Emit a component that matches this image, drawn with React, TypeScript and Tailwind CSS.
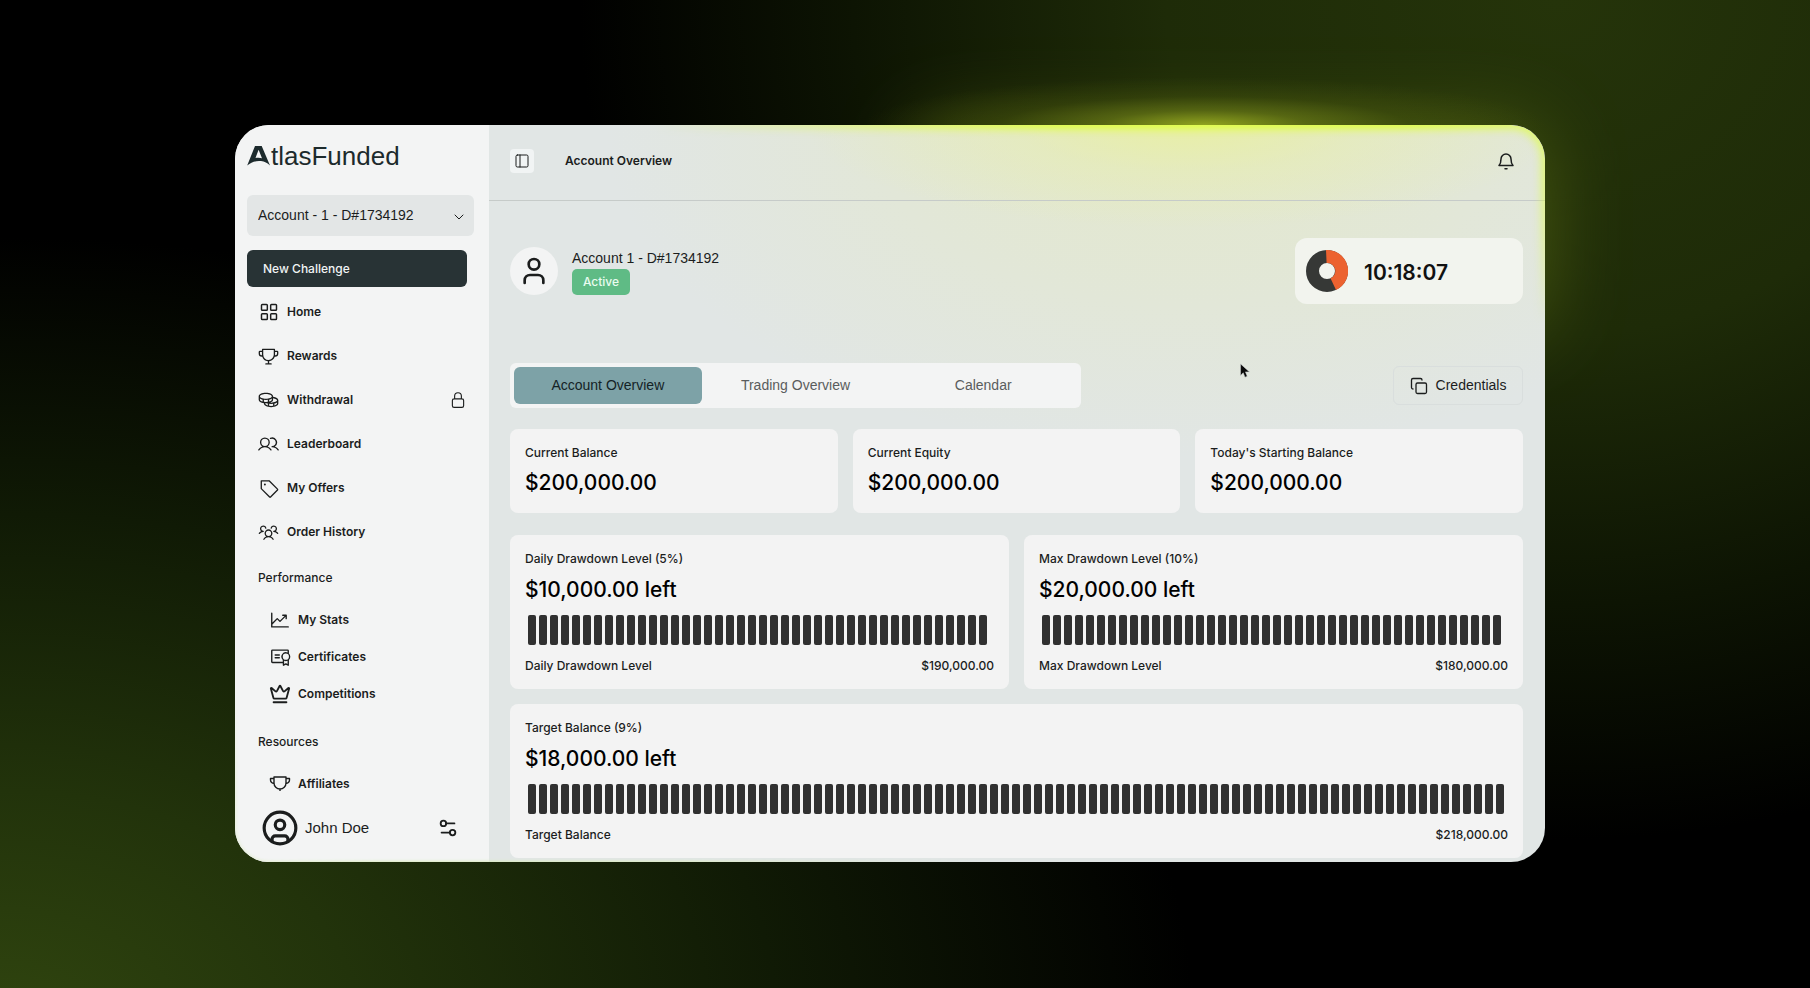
import { useState } from 'react';
import type { ComponentType } from 'react';
import {
  ChevronDown,
  CircleUser,
  Copy,
  Crown,
  LayoutGrid,
  PanelLeft,
  Settings2,
  User,
} from 'lucide-react';
import {
  PiCertificate,
  PiChartLineUp,
  PiCoins,
  PiTag,
  PiTrophy,
  PiUsers,
  PiUsersThree,
} from 'react-icons/pi';
import { HiOutlineLockClosed } from 'react-icons/hi2';

type Icon = ComponentType<{ className?: string }>;

const mainLinks: { label: string; icon: Icon; locked?: boolean; size?: string }[] = [
  { label: 'Home', icon: LayoutGrid, size: 'size-5 stroke-[1.75]' },
  { label: 'Rewards', icon: PiTrophy },
  { label: 'Withdrawal', icon: PiCoins, locked: true },
  { label: 'Leaderboard', icon: PiUsers },
  { label: 'My Offers', icon: PiTag },
  { label: 'Order History', icon: PiUsersThree },
];

const performanceLinks: { label: string; icon: Icon }[] = [
  { label: 'My Stats', icon: PiChartLineUp },
  { label: 'Certificates', icon: PiCertificate },
  { label: 'Competitions', icon: Crown },
];

const resourceLinks: { label: string; icon: Icon }[] = [
  { label: 'Affiliates', icon: TrophyCup },
];

const balances = [
  { label: 'Current Balance', value: '$200,000.00' },
  { label: 'Current Equity', value: '$200,000.00' },
  { label: "Today's Starting Balance", value: '$200,000.00' },
];

const tabs = ['Account Overview', 'Trading Overview', 'Calendar'];

export default function App() {
  return (
    <div className="relative min-h-screen overflow-hidden bg-black bg-[radial-gradient(ellipse_66%_80%_at_0%_104%,#30450f_0%,#22330b_30%,#101a05_65%,transparent_100%),radial-gradient(ellipse_54%_85%_at_86%_0%,#25340a_0%,#1e2b08_40%,#0d1403_72%,transparent_100%)] py-[125px] pr-[265px] pl-[235px] font-['Inter','Liberation_Sans',sans-serif] text-[#1b1d1d]">
      <div className="relative">
        {/* Glow behind the window */}
        <div className="absolute top-0 right-0 h-[28%] w-[48%] rounded-[34px] bg-[#6f8216] opacity-50 blur-2xl" />
        <div className="absolute -top-12 right-0 h-24 w-[52%] bg-[radial-gradient(ellipse_50%_50%_at_50%_50%,#a8bc24cc_0%,#7d8f1a80_30%,#55640f40_60%,transparent_100%)]" />

        <div className="relative flex overflow-hidden rounded-[34px] bg-[#e1e6e5]">
          <Sidebar />
          <Main />
          {/* Lit window edge */}
          <div className="pointer-events-none absolute inset-0 rounded-[34px] shadow-[inset_0_0_8px_4px_#dfff3c] mask-[radial-gradient(ellipse_44%_32%_at_76%_0%,black_30%,transparent_100%)]" />
          <div className="pointer-events-none absolute inset-0 rounded-[34px] shadow-[inset_0_0_3px_1px_#dcecc0] mask-[radial-gradient(ellipse_35%_30%_at_22%_100%,black_30%,transparent_100%)]" />
          <Cursor />
        </div>
      </div>
    </div>
  );
}

function Sidebar() {
  return (
    <aside className="flex w-[254px] shrink-0 flex-col bg-[#f3f4f4] pt-[21px] pb-2 pl-3">
      <Logo />

      <div className="relative mt-[29px] mr-[15px]">
        <select
          aria-label="Account"
          className="h-[41px] w-full appearance-none rounded-md bg-[#e3e6e6] pl-[11px] text-[14px] font-['Liberation_Sans',sans-serif]"
        >
          <option>Account - 1 - D#1734192</option>
        </select>
        <ChevronDown className="pointer-events-none absolute top-[14px] right-[7px] size-4" strokeWidth={1.5} />
      </div>

      <button className="mt-3.5 mr-[22px] h-[37px] rounded-md bg-[#283335] pl-4 text-left text-[12px] font-medium text-[#f1f4f4]">
        New Challenge
      </button>

      <nav className="mt-[3px]">
        {mainLinks.map(({ label, icon: LinkIcon, locked, size }) => (
          <a key={label} href="#" className="flex h-11 items-center pr-[22px] pl-[11px] text-[12px] font-semibold">
            <span className="mr-2 flex w-[21px] justify-center">
              <LinkIcon className={size ?? 'size-[22px]'} />
            </span>
            {label}
            {locked && <HiOutlineLockClosed className="ml-auto size-[18px]" />}
          </a>
        ))}

        <h2 className="flex h-[47px] items-center pl-[11px] text-[12px] font-medium">Performance</h2>
        {performanceLinks.map((link) => (
          <SubLink key={link.label} {...link} />
        ))}

        <h2 className="mt-1.5 flex h-[47px] items-center pl-[11px] text-[12px] font-medium">Resources</h2>
        {resourceLinks.map((link) => (
          <SubLink key={link.label} {...link} />
        ))}
      </nav>

      <div className="flex h-[52px] items-center pr-[30px] pl-[14px]">
        <CircleUser className="size-[38px]" />
        <span className="ml-1.5 text-[15px] font-['Liberation_Sans',sans-serif]">John Doe</span>
        <button aria-label="Settings" className="ml-auto">
          <Settings2 className="size-[22px]" />
        </button>
      </div>
    </aside>
  );
}

function SubLink({ label, icon: LinkIcon }: { label: string; icon: Icon }) {
  return (
    <a href="#" className="flex h-[37px] items-center pl-[22px] text-[12px] font-semibold">
      <LinkIcon className="mr-[7px] size-[22px]" />
      {label}
    </a>
  );
}

function Main() {
  const [active, setActive] = useState(tabs[0]);

  return (
    <main className="min-w-0 flex-1 bg-[radial-gradient(ellipse_36%_14%_at_66%_0%,#e8efa6_0%,#e8efa666_45%,transparent_100%),radial-gradient(ellipse_55%_45%_at_66%_0%,#e3e8cb_0%,#e3e8cb99_45%,transparent_100%)]">
      <header className="flex h-[76px] items-center border-b border-[#c6cbc9] pr-[30px] pb-1 pl-[21px]">
        <button aria-label="Toggle sidebar" className="flex size-6 items-center justify-center rounded bg-[#f1f4f4]">
          <PanelLeft className="size-4" strokeWidth={1.5} />
        </button>
        <h1 className="ml-[31px] text-[12px] font-semibold">Account Overview</h1>
        <button aria-label="Notifications" className="ml-auto">
          <Bell />
        </button>
      </header>

      <div className="pt-[37px] pr-[22px] pb-1 pl-[21px]">
        <div className="flex items-center">
          <div className="flex size-12 items-center justify-center rounded-full bg-[#f3f4f4]">
            <User className="size-8" />
          </div>
          <div className="ml-3.5 pt-px">
            <p className="text-[14px] leading-[18px] font-['Liberation_Sans',sans-serif]">Account 1 - D#1734192</p>
            <span className="mt-0.5 flex h-[26px] w-[58px] items-center justify-center rounded-[5px] bg-[#5fbb85] text-[12px] font-medium text-[#e9fbef]">
              Active
            </span>
          </div>
          <div className="ml-auto flex h-[66px] w-[228px] items-center rounded-xl bg-[#f2f4ee] pl-[11px]">
            <TimerRing />
            <span className="ml-4 pt-1 text-[21px] font-semibold text-[#111]">10:18:07</span>
          </div>
        </div>

        <div className="mt-[59px] flex items-center justify-between">
          <div role="tablist" className="flex h-[45px] w-[571px] rounded-md bg-[#f3f4f4] p-1 text-[14px] font-['Liberation_Sans',sans-serif]">
            {tabs.map((tab) => (
              <button
                key={tab}
                role="tab"
                aria-selected={tab === active}
                onClick={() => setActive(tab)}
                className={
                  tab === active
                    ? 'flex-1 rounded-md bg-[#7da2a7] text-[#142226]'
                    : 'flex-1 rounded-md text-[#5a5d5d]'
                }
              >
                {tab}
              </button>
            ))}
          </div>
          <button className="flex h-[39px] w-[130px] items-center justify-center gap-2 rounded-md border border-[#d9dedd] text-[14px] font-['Liberation_Sans',sans-serif]">
            <Copy className="size-[18px]" strokeWidth={1.75} />
            Credentials
          </button>
        </div>

        <div className="mt-[21px] grid grid-cols-3 gap-[15px]">
          {balances.map(({ label, value }) => (
            <div key={label} className="rounded-lg bg-[#f3f3f3] px-[15px] py-4">
              <p className="text-[12px] leading-4 font-medium">{label}</p>
              <p className="mt-2 text-[21px] leading-7 font-medium text-black">{value}</p>
            </div>
          ))}
        </div>

        <div className="mt-[22px] grid grid-cols-2 gap-[15px]">
          <GaugeCard title="Daily Drawdown Level (5%)" left="$10,000.00 left" footer="Daily Drawdown Level" limit="$190,000.00" bars={42} />
          <GaugeCard title="Max Drawdown Level (10%)" left="$20,000.00 left" footer="Max Drawdown Level" limit="$180,000.00" bars={42} />
          <div className="col-span-2">
            <GaugeCard title="Target Balance (9%)" left="$18,000.00 left" footer="Target Balance" limit="$218,000.00" bars={89} />
          </div>
        </div>
      </div>
    </main>
  );
}

interface GaugeCardProps {
  title: string;
  left: string;
  footer: string;
  limit: string;
  bars: number;
}

function GaugeCard({ title, left, footer, limit, bars }: GaugeCardProps) {
  return (
    <div className="rounded-lg bg-[#f3f3f3] px-[15px] pt-4 pb-[15px]">
      <p className="text-[12px] leading-4 font-medium">{title}</p>
      <p className="mt-[9px] text-[21px] leading-7 font-medium text-black">{left}</p>
      <div className="mt-[11px] flex h-[30px] gap-[3px] overflow-hidden pl-[3px]">
        {Array.from({ length: bars }, (_, i) => (
          <span key={i} className="w-2 shrink-0 rounded-xs bg-[#303030]" />
        ))}
      </div>
      <div className="mt-[13px] flex justify-between text-[12px] leading-4 font-medium">
        <span>{footer}</span>
        <span>{limit}</span>
      </div>
    </div>
  );
}

function Logo() {
  return (
    <div className="flex h-5 items-center text-[26px] leading-5 text-[#1c2a2c] font-['Liberation_Sans',sans-serif]" aria-label="AtlasFunded">
      <svg viewBox="0 0 24 20" className="h-5 w-6" fill="currentColor" aria-hidden="true">
        <path d="M9.500 0h5.200l8.300 19.500c-2.500-2.600-5.500-4-9-4.500-5-.6-9.500 1-13.800 4.500L8 0zM11.600 3.800 8.500 12c2.200-.5 4.600-.4 6.500.2z" fillRule="evenodd" />
      </svg>
      <span>tlasFunded</span>
    </div>
  );
}

function Bell() {
  return (
    <svg viewBox="0 0 18 20" className="h-5 w-[18px]" fill="none" stroke="currentColor" strokeWidth="1.500" strokeLinecap="round" strokeLinejoin="round">
      <path d="M2 14.500c1.500-1.600 2-3.500 2-6.500a5 5 0 0 1 10 0c0 3 .5 4.900 2 6.500zM8 17.800h2" />
    </svg>
  );
}

function TimerRing() {
  return (
    <svg viewBox="0 0 42 42" className="size-[42px]">
      <circle cx="21" cy="21" r="14.500" fill="none" stroke="#363836" strokeWidth="13" />
      <path d="M20 0A21 21 0 0 1 30 40L24.500 28.300A8 8 0 0 0 20.600 13z" fill="#ec6230" />
    </svg>
  );
}

function TrophyCup({ className }: { className?: string }) {
  return (
    <svg viewBox="0 0 22 22" className={className} fill="none" stroke="currentColor" strokeWidth="1.400" strokeLinejoin="round">
      <path d="M5 4h12v6a6 6 0 0 1-12 0zM5 5.500H1.500v1.500a3.500 3.500 0 0 0 3.700 3.500M17 5.500h3.500v1.500a3.500 3.500 0 0 1-3.700 3.500M11 16v2" />
    </svg>
  );
}

function Cursor() {
  return (
    <svg viewBox="0 0 12 18" className="pointer-events-none absolute top-[238px] left-[1004px] h-4 w-3">
      <path d="M1 1v13l3-3 2 5 2.500-1-2-5H11z" fill="#0a0a0a" stroke="#c9cecd" strokeWidth=".6" />
    </svg>
  );
}
